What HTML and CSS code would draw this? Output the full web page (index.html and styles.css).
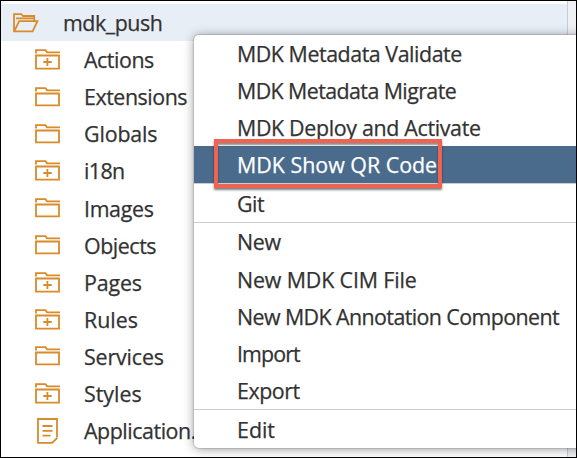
FILE: index.html
```html
<!DOCTYPE html>
<html lang="en">
<head>
<meta charset="utf-8">
<title>Workspace</title>
<link rel="stylesheet" href="styles.css">
</head>
<body>
<svg class="defs" aria-hidden="true">
  <symbol id="folder" viewBox="0 0 25 20"><path d="M1 4.4V1.2H10.5L12 3.3H25M1 6.5H24V18.3H1Z"/></symbol>
  <symbol id="folder-plus" viewBox="0 0 25 21"><path d="M1 4.4V1.2H10.5L12 3.3H25M1 6.5H24V19.6H1ZM12.4 9V17M8.3 13H16.8"/></symbol>
  <symbol id="folder-open" viewBox="0 0 26 20"><path d="M1 18V1.2H8.3L10 3H21.2V8M3 5.4H21M1.2 18.3L6.2 8.2H24.4L19.6 18.3Z"/></symbol>
  <symbol id="file" viewBox="0 0 21 26"><path d="M15 24.8H1V1H20V19.3M20.3 19.8L15 25M5.5 8H15.5M5.5 12.8H15.5M5.5 17.6H13.5"/></symbol>
</svg>
<main class="window">
  <ul class="tree">
    <li class="row root"><svg class="icon open"><use href="#folder-open"/></svg><span class="tight">mdk_push</span></li>
    <li class="row"><svg class="icon plus"><use href="#folder-plus"/></svg><span class="tight">Actions</span></li>
    <li class="row"><svg class="icon"><use href="#folder"/></svg><span class="tight">Extensions</span></li>
    <li class="row"><svg class="icon"><use href="#folder"/></svg><span class="slight">Globals</span></li>
    <li class="row"><svg class="icon plus"><use href="#folder-plus"/></svg><span class="tighter">i18n</span></li>
    <li class="row"><svg class="icon"><use href="#folder"/></svg><span class="snug">Images</span></li>
    <li class="row"><svg class="icon"><use href="#folder"/></svg><span class="tight">Objects</span></li>
    <li class="row"><svg class="icon plus"><use href="#folder-plus"/></svg><span class="slight">Pages</span></li>
    <li class="row"><svg class="icon plus"><use href="#folder-plus"/></svg><span>Rules</span></li>
    <li class="row"><svg class="icon"><use href="#folder"/></svg><span class="slight">Services</span></li>
    <li class="row"><svg class="icon plus"><use href="#folder-plus"/></svg><span>Styles</span></li>
    <li class="row"><svg class="icon file"><use href="#file"/></svg><span class="tight">Application.app</span></li>
    <li class="row next"><svg class="icon open"><use href="#folder-open"/></svg></li>
  </ul>
  <div class="scrollbar"></div>
  <ul class="menu">
    <li class="item tight">MDK Metadata Validate</li>
    <li class="item tighter">MDK Metadata Migrate</li>
    <li class="item snug">MDK Deploy and Activate</li>
    <li class="item selected">MDK Show QR Code</li>
    <li class="item split tight">Git</li>
    <li class="item split snug">New</li>
    <li class="item slight">New MDK CIM File</li>
    <li class="item tighter">New MDK Annotation Component</li>
    <li class="item tightest">Import</li>
    <li class="item tight">Export</li>
    <li class="item split">Edit</li>
  </ul>
  <div class="callout"></div>
</main>
</body>
</html>
```
FILE: styles.css
```css
* { box-sizing: border-box; }
body { margin: 0; background: #fff; }
.defs { position: absolute; width: 0; height: 0; }
.window {
  position: relative;
  width: 577px;
  height: 458px;
  overflow: hidden;
  border: 1px solid #000;
  padding-top: 3px;
  font: 21.4px "Open Sans", "Noto Sans", sans-serif;
  color: #323232;
  -webkit-text-stroke: 0.25px currentColor;
}
ul { list-style: none; margin: 0; padding: 0; }
.row {
  display: flex;
  align-items: center;
  height: 37.1px;
  padding-left: 34px;
  white-space: nowrap;
}
.slight { letter-spacing: -0.14px; }
.snug { letter-spacing: -0.33px; }
.tight { letter-spacing: -0.45px; }
.tighter { letter-spacing: -0.58px; }
.tightest { letter-spacing: -0.9px; }
.root { background: #e7eef6; padding-left: 12px; }
.next { padding-left: 12px; }
.icon {
  flex: none;
  width: 25px;
  height: 20px;
  margin-right: 24px;
  fill: none;
  stroke: #d98b2b;
  stroke-width: 1.8;
}
.plus { height: 21px; }
.open { width: 26px; }
.file { width: 21px; height: 26px; margin-left: 2px; margin-right: 26px; }
.scrollbar {
  position: absolute;
  right: 0;
  top: 0;
  width: 9px;
  height: 456px;
  background: #f0f1f5;
  border-left: 1px solid #c9ccd3;
}
.menu {
  position: absolute;
  left: 193px;
  top: 33.5px;
  width: 400px;
  background: #fff;
  border-radius: 5px;
  box-shadow: 0 0 1px 1px rgba(0,0,0,.12), 0 1px 11px rgba(0,0,0,.4);
}
.item {
  display: flex;
  align-items: center;
  height: 37.2px;
  padding-left: 43px;
  white-space: nowrap;
}
.split { height: 38.7px; border-top: 1.5px solid #ccc; }
.selected { background: #4a6b8c; color: #fff; }
.callout {
  position: absolute;
  left: 213px;
  top: 138px;
  width: 228px;
  height: 49px;
  border: 4px solid #ee6352;
  box-shadow: 0 2px 2px rgba(0,0,0,.5), inset 0 2px 2px rgba(0,0,0,.45);
}
```
